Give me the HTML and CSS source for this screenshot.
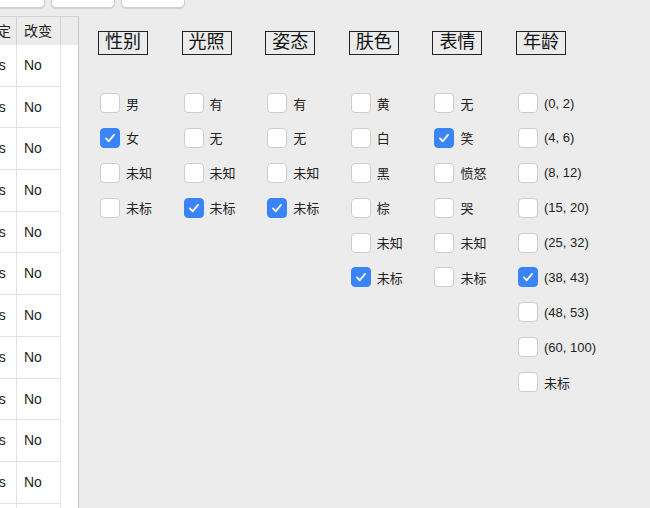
FILE: index.html
```html
<!DOCTYPE html>
<html lang="zh">
<head>
<meta charset="utf-8">
<link rel="stylesheet" href="styles.css">
</head>
<body>
<div class="topbar">
  <div class="btn b1"></div>
  <div class="btn b2"></div>
  <div class="btn b3"></div>
</div>
<div class="main">
  <div class="panel">
    <div class="trow thead">
      <div class="c1">稳定</div><div class="c2">改变</div><div class="c3"></div>
    </div>
    <div class="trow"><div class="c1">Yes</div><div class="c2">No</div><div class="c3"></div></div>
    <div class="trow"><div class="c1">Yes</div><div class="c2">No</div><div class="c3"></div></div>
    <div class="trow"><div class="c1">Yes</div><div class="c2">No</div><div class="c3"></div></div>
    <div class="trow"><div class="c1">Yes</div><div class="c2">No</div><div class="c3"></div></div>
    <div class="trow"><div class="c1">Yes</div><div class="c2">No</div><div class="c3"></div></div>
    <div class="trow"><div class="c1">Yes</div><div class="c2">No</div><div class="c3"></div></div>
    <div class="trow"><div class="c1">Yes</div><div class="c2">No</div><div class="c3"></div></div>
    <div class="trow"><div class="c1">Yes</div><div class="c2">No</div><div class="c3"></div></div>
    <div class="trow"><div class="c1">Yes</div><div class="c2">No</div><div class="c3"></div></div>
    <div class="trow"><div class="c1">Yes</div><div class="c2">No</div><div class="c3"></div></div>
    <div class="trow"><div class="c1">Yes</div><div class="c2">No</div><div class="c3"></div></div>
    <div class="trow"><div class="c1">Yes</div><div class="c2">No</div><div class="c3"></div></div>
  </div>
  <div class="content">
    <div class="group">
      <div class="heading">性别</div>
      <div class="list">
        <div class="item"><span class="cb"></span><span class="lbl">男</span></div>
        <div class="item"><span class="cb on"><svg viewBox="0 0 20 20"><path d="M5.5 10.5 L8.6 13.6 L14.5 6.5"/></svg></span><span class="lbl">女</span></div>
        <div class="item"><span class="cb"></span><span class="lbl">未知</span></div>
        <div class="item"><span class="cb"></span><span class="lbl">未标</span></div>
      </div>
    </div>
    <div class="group">
      <div class="heading">光照</div>
      <div class="list">
        <div class="item"><span class="cb"></span><span class="lbl">有</span></div>
        <div class="item"><span class="cb"></span><span class="lbl">无</span></div>
        <div class="item"><span class="cb"></span><span class="lbl">未知</span></div>
        <div class="item"><span class="cb on"><svg viewBox="0 0 20 20"><path d="M5.5 10.5 L8.6 13.6 L14.5 6.5"/></svg></span><span class="lbl">未标</span></div>
      </div>
    </div>
    <div class="group">
      <div class="heading">姿态</div>
      <div class="list">
        <div class="item"><span class="cb"></span><span class="lbl">有</span></div>
        <div class="item"><span class="cb"></span><span class="lbl">无</span></div>
        <div class="item"><span class="cb"></span><span class="lbl">未知</span></div>
        <div class="item"><span class="cb on"><svg viewBox="0 0 20 20"><path d="M5.5 10.5 L8.6 13.6 L14.5 6.5"/></svg></span><span class="lbl">未标</span></div>
      </div>
    </div>
    <div class="group">
      <div class="heading">肤色</div>
      <div class="list">
        <div class="item"><span class="cb"></span><span class="lbl">黄</span></div>
        <div class="item"><span class="cb"></span><span class="lbl">白</span></div>
        <div class="item"><span class="cb"></span><span class="lbl">黑</span></div>
        <div class="item"><span class="cb"></span><span class="lbl">棕</span></div>
        <div class="item"><span class="cb"></span><span class="lbl">未知</span></div>
        <div class="item"><span class="cb on"><svg viewBox="0 0 20 20"><path d="M5.5 10.5 L8.6 13.6 L14.5 6.5"/></svg></span><span class="lbl">未标</span></div>
      </div>
    </div>
    <div class="group">
      <div class="heading">表情</div>
      <div class="list">
        <div class="item"><span class="cb"></span><span class="lbl">无</span></div>
        <div class="item"><span class="cb on"><svg viewBox="0 0 20 20"><path d="M5.5 10.5 L8.6 13.6 L14.5 6.5"/></svg></span><span class="lbl">笑</span></div>
        <div class="item"><span class="cb"></span><span class="lbl">愤怒</span></div>
        <div class="item"><span class="cb"></span><span class="lbl">哭</span></div>
        <div class="item"><span class="cb"></span><span class="lbl">未知</span></div>
        <div class="item"><span class="cb"></span><span class="lbl">未标</span></div>
      </div>
    </div>
    <div class="group">
      <div class="heading">年龄</div>
      <div class="list">
        <div class="item"><span class="cb"></span><span class="lbl">(0, 2)</span></div>
        <div class="item"><span class="cb"></span><span class="lbl">(4, 6)</span></div>
        <div class="item"><span class="cb"></span><span class="lbl">(8, 12)</span></div>
        <div class="item"><span class="cb"></span><span class="lbl">(15, 20)</span></div>
        <div class="item"><span class="cb"></span><span class="lbl">(25, 32)</span></div>
        <div class="item"><span class="cb on"><svg viewBox="0 0 20 20"><path d="M5.5 10.5 L8.6 13.6 L14.5 6.5"/></svg></span><span class="lbl">(38, 43)</span></div>
        <div class="item"><span class="cb"></span><span class="lbl">(48, 53)</span></div>
        <div class="item"><span class="cb"></span><span class="lbl">(60, 100)</span></div>
        <div class="item"><span class="cb"></span><span class="lbl">未标</span></div>
      </div>
    </div>
  </div>
</div>
</body>
</html>
```

FILE: styles.css
```css
html, body {
  margin: 0;
  padding: 0;
}
body {
  width: 650px;
  height: 508px;
  overflow: hidden;
  background: #ececec;
  font-family: "Liberation Sans", "Noto Sans CJK SC", sans-serif;
  color: #1e1e1e;
}
.topbar {
  display: flex;
  height: 8px;
  gap: 6px;
  overflow: visible;
}
.btn {
  height: 28px;
  margin-top: -20px;
  background: #fff;
  border: 1px solid #cfcfcf;
  border-radius: 5px;
  box-sizing: border-box;
  box-shadow: 0 0.5px 1px rgba(0,0,0,0.12);
}
.b1 { width: 60px; margin-left: -15px; }
.b2 { width: 64px; }
.b3 { width: 64px; }

.main {
  display: flex;
  margin-top: 8px;
}
.panel {
  width: 79px;
  height: 492px;
  flex: none;
  background: #fff;
  border-top: 1px solid #d4d4d4;
  border-right: 1px solid #c8c8c8;
  box-sizing: border-box;
  overflow: hidden;
}
.trow {
  display: flex;
  height: 41.7px;
  margin-left: -25px;
  font-size: 14px;
  line-height: 41px;
}
.trow .c1 {
  width: 42px;
  flex: none;
  padding-left: 8px;
  box-sizing: border-box;
  border-right: 1px solid #e3e3e3;
  border-bottom: 1px solid #e3e3e3;
  white-space: nowrap;
  overflow: hidden;
}
.trow .c2 {
  width: 44px;
  flex: none;
  padding-left: 7px;
  box-sizing: border-box;
  border-right: 1px solid #e3e3e3;
  border-bottom: 1px solid #e3e3e3;
}
.trow .c3 {
  flex: 1;
}
.thead {
  height: 28px;
  line-height: 28px;
  background: #ececec;
  font-size: 14px;
  color: #222;
}
.thead .c1, .thead .c2 {
  border-right: 1px solid #d0d0d0;
  border-bottom: 1px solid #ececec;
  height: 28px;
}

.content {
  display: grid;
  grid-template-columns: repeat(6, 83.6px);
  align-items: start;
  padding-left: 19px;
  padding-top: 15px;
}
.group {
  display: flex;
  flex-direction: column;
  align-items: flex-start;
}
.heading {
  border: 1.5px solid #222;
  padding: 0 6px;
  height: 24px;
  box-sizing: border-box;
  font-size: 18px;
  line-height: 21px;
  color: #111;
}
.list {
  margin-top: 38px;
  padding-left: 2px;
  display: flex;
  flex-direction: column;
  gap: 14.9px;
}
.item {
  display: flex;
  align-items: center;
  height: 20px;
  gap: 6px;
}
.cb {
  width: 20px;
  height: 20px;
  box-sizing: border-box;
  border: 1px solid #cdcdcd;
  border-radius: 4px;
  background: #fff;
  display: flex;
  flex: none;
}
.cb.on {
  background: #3a84f7;
  border-color: #3a84f7;
}
.cb svg {
  width: 18px;
  height: 18px;
  fill: none;
  stroke: #fff;
  stroke-width: 2;
  stroke-linecap: round;
  stroke-linejoin: round;
}
.lbl {
  font-size: 13px;
  color: #222;
  white-space: nowrap;
}
```
